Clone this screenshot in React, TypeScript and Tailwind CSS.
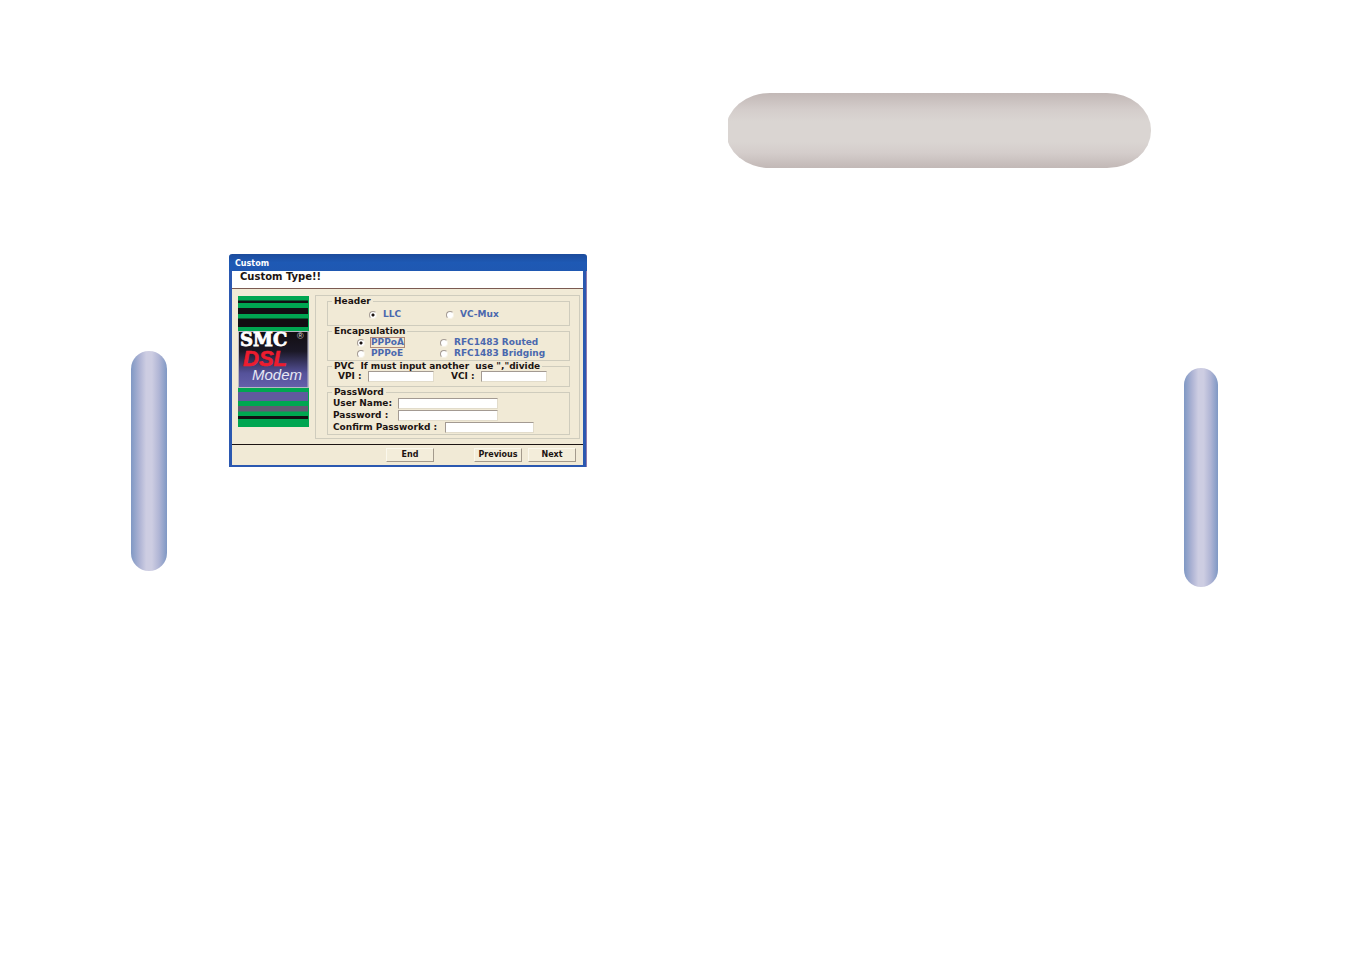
import { useState } from "react";

const fieldsetClass = "min-w-0 border border-[#cfccbd]";
const legendClass = "ml-1 px-0.5 leading-[10px] text-[#1c1412] whitespace-pre";
const inputClass =
    "h-[11px] min-w-0 bg-white border border-[#e2dccb] border-t-[#a39a92] border-l-[#a39a92] px-0.5 text-[9px] font-normal outline-none";
const buttonClass =
    "h-[14px] w-12 bg-[#f3edda] border border-[#fbf8ec] border-r-[#a39a8c] border-b-[#a39a8c] text-[8px] leading-[12px] font-bold text-[#1c1412]";

type RadioProps = {
    name: string;
    label: string;
    checked: boolean;
    focused?: boolean;
    onSelect: (label: string) => void;
};

function Radio({ name, label, checked, focused, onSelect }: RadioProps) {
    return (
        <label className="flex h-[11px] items-center gap-[5px] leading-[9px] text-[#4a68ae]">
            <input
                type="radio"
                name={name}
                checked={checked}
                onChange={() => onSelect(label)}
                className="size-2 shrink-0 appearance-none rounded-full border border-[#f7f3e6] border-t-[#a39a92] border-l-[#a39a92] bg-white checked:bg-[radial-gradient(circle,#1c1412_1px,#ffffff_2px)]"
            />
            <span className={focused ? "border border-[#b08a78]" : "border border-transparent"}>{label}</span>
        </label>
    );
}

function Logo() {
    return (
        <svg viewBox="0 0 71 131" className="h-[131px] w-[71px] shrink-0" role="img" aria-label="SMC DSL Modem">
            <defs>
                <linearGradient id="panel" x1="0" y1="0" x2="0" y2="1">
                    <stop offset="0" stopColor="#120e12" />
                    <stop offset="0.35" stopColor="#1b1826" />
                    <stop offset="0.75" stopColor="#55529a" />
                    <stop offset="1" stopColor="#6460aa" />
                </linearGradient>
            </defs>
            {/* Green bars */}
            <rect width="71" height="131" fill="#00a651" />
            {/* Dark and purple bands between them */}
            <rect y="4.5" width="70" height="2.5" fill="#120e12" />
            <rect y="12" width="70" height="6" fill="#120e12" />
            <rect y="22.5" width="70" height="8.5" fill="#120e12" />
            <rect y="96" width="70" height="9" fill="#605a9e" />
            <rect y="110" width="70" height="5.5" fill="#625a74" />
            <rect y="120" width="70" height="3" fill="#120e12" />
            <rect y="35" width="71" height="57" fill="#b8b8c4" />
            <rect x="1" y="36" width="68.5" height="55" fill="url(#panel)" />
            <text x="2" y="50" fontFamily="DejaVu Serif" fontWeight="700" fontSize="18" fill="#ffffff" stroke="#ffffff" strokeWidth="0.8">SMC</text>
            <text x="59" y="43" fontFamily="Liberation Sans" fontWeight="400" fontSize="9" fill="#d8d8d8">®</text>
            <text x="5" y="70" fontFamily="Liberation Sans" fontWeight="700" fontStyle="italic" fontSize="22" fill="#ed1c2e" stroke="#ed1c2e" strokeWidth="0.6">DSL</text>
            <text x="14" y="84" fontFamily="Liberation Sans" fontWeight="400" fontStyle="italic" fontSize="15" fill="#e8e8f4">Modem</text>
        </svg>
    );
}

function CustomDialog() {
    const [header, setHeader] = useState("LLC");
    const [encapsulation, setEncapsulation] = useState("PPPoA");

    return (
        <form
            onSubmit={(e) => e.preventDefault()}
            className="mt-[254px] w-[358px] shrink-0 font-['DejaVu_Sans',sans-serif] text-[9px] font-bold text-[#1c1412]"
        >
            {/* Title bar */}
            <div className="flex h-[17px] items-center rounded-t-[3px] bg-linear-to-b from-[#1c4c9c] via-[#1e59b4] to-[#1f58b2] pt-[3px] pl-[6px] text-[8px] leading-[10px] text-white">
                Custom
            </div>
            <div className="mr-px border-x-[3px] border-b-2 border-[#2b58b0] bg-[#f1ead6] shadow-[1px_0_0_#8d7ab0]">
                <h1 className="h-[18px] border-b border-[#7b5a52] bg-white pl-2 text-[10px] leading-[12px]">Custom Type!!</h1>

                <div className="flex items-start gap-[6px] border-b border-[#1c1412] pt-[6px] pr-[3px] pb-[5px] pl-[6px]">
                    <div className="pt-px">
                        <Logo />
                    </div>

                    <div className="grow border border-[#cfccbd] pr-[9px] pb-[3px] pl-[11px]">
                        <fieldset className={fieldsetClass}>
                            <legend className={legendClass}>Header</legend>
                            <div className="grid grid-cols-[77px_1fr] pt-[3px] pb-[5px] pl-[41px]">
                                {["LLC", "VC-Mux"].map((label) => (
                                    <Radio key={label} name="header" label={label} checked={header === label} onSelect={setHeader} />
                                ))}
                            </div>
                        </fieldset>

                        <fieldset className={fieldsetClass}>
                            <legend className={legendClass}>Encapsulation</legend>
                            <div className="grid grid-cols-[83px_1fr] pt-px pb-px pl-[29px] whitespace-nowrap">
                                {["PPPoA", "RFC1483 Routed", "PPPoE", "RFC1483 Bridging"].map((label) => (
                                    <Radio
                                        key={label}
                                        name="encapsulation"
                                        label={label}
                                        checked={encapsulation === label}
                                        focused={label === "PPPoA"}
                                        onSelect={setEncapsulation}
                                    />
                                ))}
                            </div>
                        </fieldset>

                        <fieldset className={fieldsetClass}>
                            <legend className={legendClass}>{'PVC  If must input another  use ","divide'}</legend>
                            <div className="flex h-[15px] items-start pl-[10px] leading-[10px]">
                                <label htmlFor="vpi" className="w-[30px]">VPI :</label>
                                <input id="vpi" type="text" className={inputClass + " w-[66px]"} />
                                <label htmlFor="vci" className="ml-[17px] w-[30px]">VCI :</label>
                                <input id="vci" type="text" className={inputClass + " w-[66px]"} />
                            </div>
                        </fieldset>

                        <fieldset className={fieldsetClass}>
                            <legend className={legendClass}>PassWord</legend>
                            <div className="pb-px pl-[5px] leading-[10px]">
                                <div className="flex h-[12px] items-center">
                                    <label htmlFor="userName" className="w-[65px]">User Name:</label>
                                    <input id="userName" type="text" className={inputClass + " w-[100px]"} />
                                </div>
                                <div className="flex h-[12px] items-center">
                                    <label htmlFor="password" className="w-[65px]">Password :</label>
                                    <input id="password" type="password" className={inputClass + " w-[100px]"} />
                                </div>
                                <div className="flex h-[12px] items-center">
                                    <label htmlFor="confirm" className="w-[112px]">Confirm Passworkd :</label>
                                    <input id="confirm" type="password" className={inputClass + " w-[89px]"} />
                                </div>
                            </div>
                        </fieldset>
                    </div>
                </div>

                {/* Buttons */}
                <div className="flex h-5 items-start justify-end gap-[6px] pt-[3px] pr-[7px]">
                    <button type="button" className={buttonClass + " mr-[34px]"}>End</button>
                    <button type="button" className={buttonClass}>Previous</button>
                    <button type="submit" className={buttonClass}>Next</button>
                </div>
            </div>
        </form>
    );
}

export default function App() {
    return (
        <main className="flex min-h-screen items-start justify-between bg-white pr-[133px] pl-[131px]">
            <section className="flex items-start gap-[62px]">
                <div className="mt-[351px] h-[220px] w-9 rounded-[18px] bg-[linear-gradient(to_right,#7f98c4,#b0b5d5_25%,#cdcde2_42%,#cdcde2_58%,#b0b5d5_78%,#7f98c4)]" />
                <CustomDialog />
            </section>

            <section className="flex items-start gap-[33px]">
                {/* Banner, its left end is cut off */}
                <div className="mt-[93px] w-[423px] overflow-hidden">
                    <div className="-ml-0.5 h-[75px] rounded-[44px/37px] bg-[linear-gradient(to_bottom,#c2b8b6,#d4cdcb_22%,#dad5d2_38%,#dad5d2_65%,#d4cdcb_80%,#c2b8b6)]" />
                </div>
                <div className="mt-[368px] h-[219px] w-[34px] rounded-[17px] bg-[linear-gradient(to_right,#7f98c4,#b0b5d5_25%,#cdcde2_42%,#cdcde2_58%,#b0b5d5_78%,#7f98c4)]" />
            </section>
        </main>
    );
}
